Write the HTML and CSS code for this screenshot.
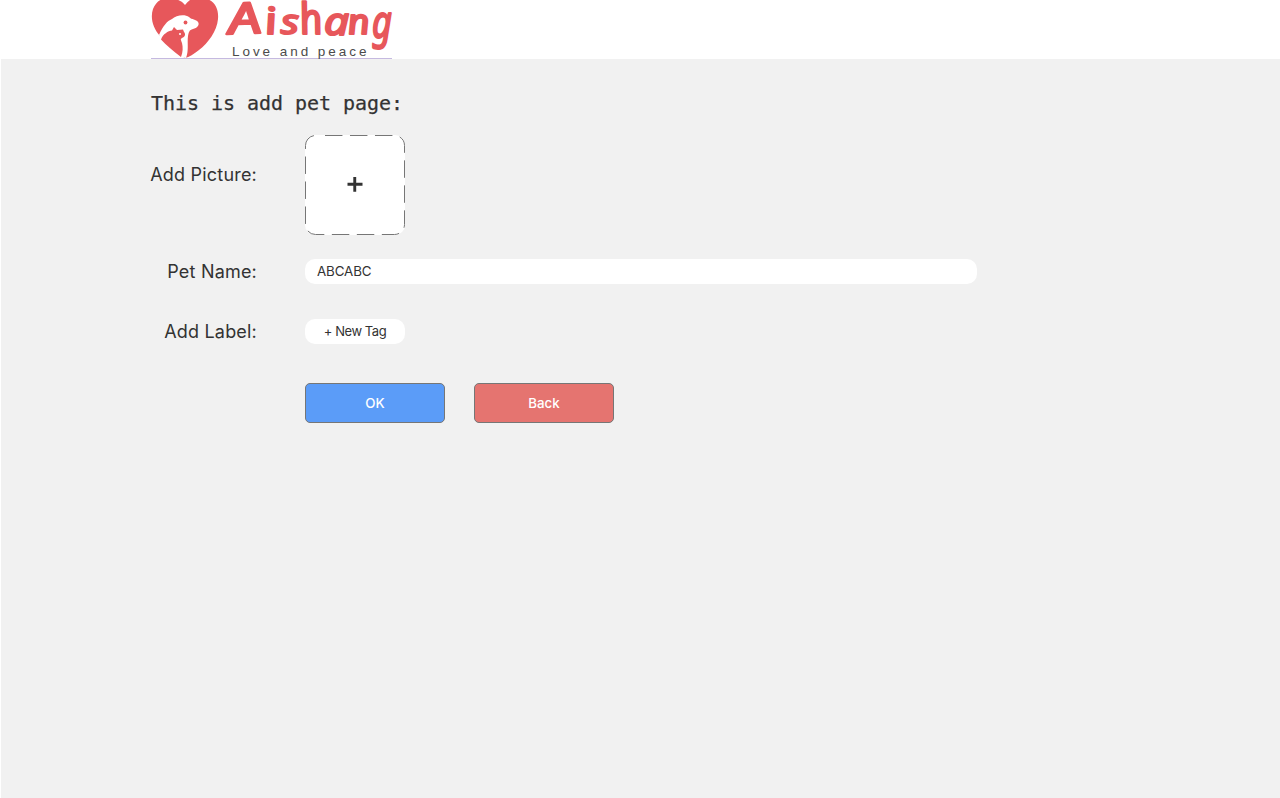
FILE: index.html
```html
<!DOCTYPE html>
<html lang="en">
<head>
<meta charset="utf-8">
<title>Add pet</title>
<link rel="stylesheet" href="styles.css">
</head>
<body>
<header class="header">
  <a class="logo">
    <svg class="logo-art" width="241" height="58" viewBox="0 0 241 58">
      <path class="heart" d="M34 5C39-2 46-4 53-2C63 0 68 8 67 19C66 31 57 43 48 50C43 54 38 57 34 58C27 54 17 46 9 36C2 28-1 18 2 9C5 1 12-3 20-2C26-1 31 1 34 5Z"/>
      <path class="dog" d="M8 35C12 26 16 21 21 19C25 15 34 14 38 17C41 20 45 19 47 22C49 25 46 28 42 29C38 30 38 32 37 36C36 43 38 50 35 58L30 57L28 39L11 40Z"/>
      <path class="heart" d="M10 39.500C12 34 17 31 21 30.500L23 27L26 30L32 29.500L33 32C35 34 34 37 31 38C29 39 30 40 31 43C32 47 32 52 30 57C22 51 15 45 10 39.500Z"/>
      <circle class="heart" cx="34.500" cy="22.500" r="1.900"/>
      <circle class="dog" cx="29" cy="34" r="1"/>
      <g class="brand">
        <text transform="translate(79 34) rotate(-2) skewX(8)" font-size="43" textLength="33" lengthAdjust="spacingAndGlyphs">A</text>
        <text transform="translate(116 34) skewX(12)" font-size="37" textLength="12" lengthAdjust="spacingAndGlyphs">i</text>
        <text transform="translate(130 34)" font-size="35" textLength="18" lengthAdjust="spacingAndGlyphs">s</text>
        <text transform="translate(151 34) skewX(12)" font-size="43" textLength="23" lengthAdjust="spacingAndGlyphs">h</text>
        <text transform="translate(173 35)" font-size="39" textLength="25" lengthAdjust="spacingAndGlyphs">a</text>
        <text transform="translate(198 34) skewX(8)" font-size="35" textLength="22" lengthAdjust="spacingAndGlyphs">n</text>
        <text transform="translate(221 38)" font-size="46" textLength="20" lengthAdjust="spacingAndGlyphs">g</text>
      </g>
      <text class="tagline" x="81" y="56" textLength="136">Love and peace</text>
    </svg>
  </a>
</header>
<main class="page">
  <h1 class="title">This is add pet page:</h1>
  <form class="form">
    <div class="row picture-row">
      <span class="label">Add Picture:</span>
      <button class="upload" type="button" aria-label="Add picture">
        <svg width="100" height="100" viewBox="0 0 100 100">
          <rect class="tile" width="100" height="100" rx="10"/>
          <path class="dashes" d="M20 .5H89.500A10 10 0 0 1 99.500 10.500V89.500A10 10 0 0 1 89.500 99.500H10.500A10 10 0 0 1 .5 89.500V10.500A10 10 0 0 1 10.500 .5H12"/>
          <path class="plus" d="M42.500 49.250H57.500M49.750 42V56.800"/>
        </svg>
      </button>
    </div>
    <div class="row name-row">
      <span class="label">Pet Name:</span>
      <input class="name" type="text" value="ABCABC">
    </div>
    <div class="row tag-row">
      <span class="label">Add Label:</span>
      <button class="tag" type="button">+ New Tag</button>
    </div>
    <div class="actions">
      <button class="button ok" type="button">OK</button>
      <button class="button back" type="button">Back</button>
    </div>
  </form>
</main>
</body>
</html>
```
FILE: styles.css
```css
* { box-sizing: border-box; }
body {
  margin: 0;
  height: 798px;
  overflow: hidden;
  display: flex;
  flex-direction: column;
  background: #fff;
  color: #333;
  font-family: Inter, "Noto Sans", sans-serif;
}
button, input { font-family: inherit; padding: 0; border: 0; color: #333; }
.header { height: 59px; padding-left: 151px; }
.logo { display: block; width: 241px; height: 59px; border-bottom: 1px solid #c5b9e0; }
.logo-art { display: block; overflow: visible; }
.heart { fill: #e7575b; }
.dog { fill: #fff; }
.brand {
  fill: #e7575b;
  stroke: #e7575b;
  stroke-width: 2.1;
  stroke-linejoin: round;
  font-family: "Noto Sans", sans-serif;
  font-weight: 400;
  font-style: italic;
}
.tagline { fill: #4b4b4b; font: 13.5px "Liberation Sans", sans-serif; letter-spacing: 1.6px; }
.page { flex: 1; margin-left: 1px; padding: 32px 0 0 150px; background: #f1f1f1; }
.title { margin: 0; height: 44px; font: 400 20px/24px "DejaVu Sans Mono", monospace; letter-spacing: -.04px; -webkit-text-stroke: .25px #333; }
.row { display: flex; align-items: center; }
.label { width: 106px; margin-right: 48px; display: flex; justify-content: flex-end; font-size: 18px; line-height: 24px; letter-spacing: .2px; white-space: nowrap; }
.picture-row { height: 100px; }
.picture-row .label { padding-bottom: 20px; box-sizing: content-box; }
.upload { width: 100px; height: 100px; background: none; }
.upload svg { display: block; }
.tile { fill: #fff; }
.dashes { fill: none; stroke: #767676; stroke-width: 1; stroke-dasharray: 17.450 7.540; }
.plus { fill: none; stroke: #333; stroke-width: 2.900; }
.name-row { height: 25px; margin-top: 24px; }
.name { width: 672px; height: 25px; padding: 0 12px 1px; border-radius: 10px; background: #fff; font-size: 13.333px; letter-spacing: -.1px; }
.tag-row { height: 25px; margin-top: 35px; }
.tag { width: 100px; height: 25px; padding-bottom: 1px; border-radius: 10px; background: #fff; font-size: 13px; letter-spacing: -.45px; }
.actions { display: flex; gap: 29px; margin: 39px 0 0 154px; }
.button { width: 140px; height: 40px; border: 1px solid #767676; border-radius: 5px; color: #fff; font-size: 13.333px; font-weight: 500; }
.ok { background: #5b9cf8; }
.back { background: #e57470; }
```
